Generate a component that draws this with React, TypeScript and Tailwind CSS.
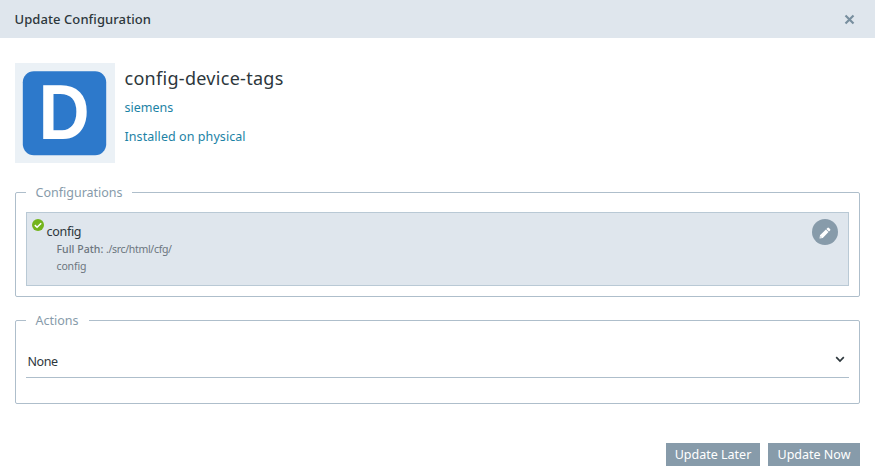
import type { ReactNode } from "react";

function Section({ title, className, titleClass, children }: { title: string; className: string; titleClass: string; children: ReactNode }) {
  return (
    <fieldset className={`min-w-0 rounded-[2px] border border-[#aebecb] px-[10px] ${className}`}>
      <legend className={`h-[20px] whitespace-nowrap pl-[9.5px] text-[12.5px] leading-[22px] text-[#879baa] ${titleClass}`}>{title}</legend>
      {children}
    </fieldset>
  );
}

function AppLogo() {
  return (
    <div className="flex size-[100px] shrink-0 items-center justify-center bg-[#ebf1f6]">
      <svg width="100" height="100" viewBox="0 0 100 100">
        <rect x="7.8" y="8.2" width="83.4" height="84" rx="11" fill="#2d79cb" />
        <text x="-5" y="0" transform="translate(28 76) scale(.92 1)" fill="#fff" className="font-['Liberation_Sans',sans-serif] text-[77px] font-bold">D</text>
      </svg>
    </div>
  );
}

export default function App() {
  return (
    <div className="h-[473px] w-[875px] overflow-hidden bg-white font-['Noto_Sans',sans-serif] text-[#2d373c]">
      <header className="flex h-[38px] items-center justify-between bg-[#dfe6ed] pl-[14.5px] pr-[20px]">
        <h1 className="mt-[2px] text-[13px] font-medium tracking-[0.08px]">Update Configuration</h1>
        <svg width="11" height="11" viewBox="0 0 11 11" className="mt-[1px]">
          <path d="M1.5 1.5L9.5 9.5M9.5 1.5L1.5 9.5" stroke="#788f9f" strokeWidth="2.15" />
        </svg>
      </header>
      <main className="px-[15px] pt-[25px]">
        <div className="flex gap-[9.5px]">
          <AppLogo />
          <div>
            <h2 className="h-[32px] text-[18px] leading-[31px] tracking-[0.29px]">config-device-tags</h2>
            <p className="h-[29px] text-[12.5px] leading-[25px] text-[#1c82a5]">siemens</p>
            <p className="text-[12.5px] leading-[25px] tracking-[0.07px] text-[#1c82a5]">Installed on physical</p>
          </div>
        </div>
        <Section title="Configurations" className="mt-[19px] h-[115px]" titleClass="w-[106px]">
          <div className="mt-[10px] flex h-[74px] justify-between border border-[#b9c9d5] bg-[#dfe6ed] pl-[5px] pr-[10px] pt-[6px]">
            <div className="flex gap-[2.5px]">
              <svg width="12" height="12" viewBox="0 0 12 12">
                <circle cx="6" cy="6" r="6" fill="#73b41b" />
                <path d="M2.8 6.1L5.1 8.2L9.2 4.2" fill="none" stroke="#fff" strokeWidth="1.5" />
              </svg>
              <div>
                <p className="mt-[3px] h-[19px] text-[12.5px] leading-[20px] tracking-[-0.3px]">config</p>
                <p className="w-[130px] pl-[10px] text-[10.5px] leading-[17px] tracking-[-0.15px] text-[#6b757d]">
                  <span className="font-medium tracking-[0.04px]">Full Path:</span> <span className="tracking-[-0.32px]">./src/html/cfg/</span><br />config
                </p>
              </div>
            </div>
            <button aria-label="Edit configuration" className="flex size-[26px] items-center justify-center rounded-full bg-[#879baa] text-white">
              <svg width="12" height="12" viewBox="0 0 12 12" fill="currentColor" className="-ml-[1px] mt-[1px]">
                <path d="M.5 11.5L1 8.2L6.9 2.5L9.5 5.1L3.8 11ZM7.4 2L8.7.8Q9.3.3 9.9.9L11.1 2.1Q11.7 2.7 11.1 3.4L10 4.6Z" />
                <path d="M1.4 10.6L1.7 9.2L2.8 10.3Z" fill="#879baa" />
              </svg>
            </button>
          </div>
        </Section>
        <Section title="Actions" className="mt-[13px] h-[94px]" titleClass="w-[63px]">
          <div className="mt-[15px] flex h-[33px] items-center justify-between border-b border-[#aebecb] pl-[1.5px] pr-[4px] text-[12.5px]">
            <span className="mt-[2px] tracking-[-0.4px]">None</span>
            <svg width="10" height="7" viewBox="0 0 10 7" className="-mt-[4px]">
              <path d="M1.2 1.2L5 5L8.8 1.2" fill="none" stroke="#2d373c" strokeWidth="1.7" />
            </svg>
          </div>
        </Section>
        <div className="mt-[39px] flex justify-end gap-[8px] text-[12.5px] leading-[23px] text-white">
          <button className="h-[23px] w-[94px] whitespace-nowrap bg-[#879baa]">Update Later</button>
          <button className="h-[23px] w-[92px] whitespace-nowrap bg-[#879baa]">Update Now</button>
        </div>
      </main>
    </div>
  );
}
